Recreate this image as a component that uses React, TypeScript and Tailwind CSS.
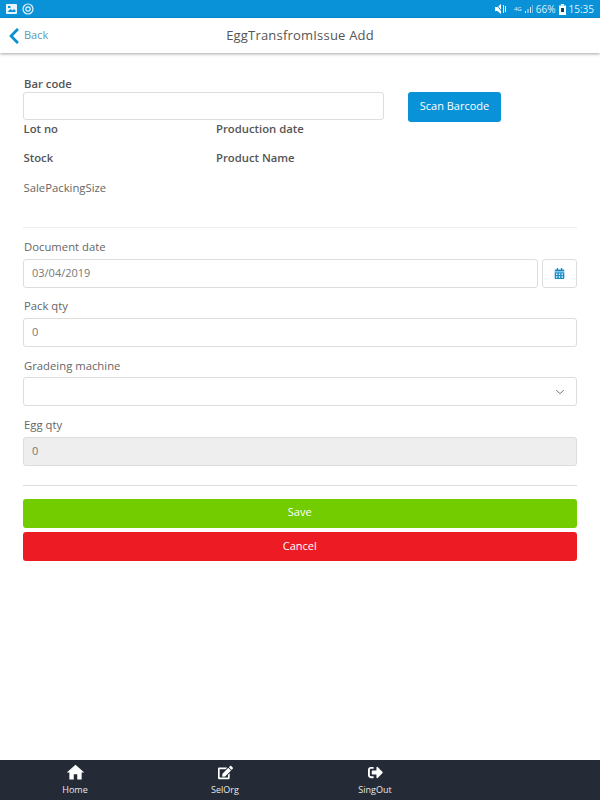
import { FaChevronLeft, FaCalendarAlt, FaEdit, FaSignOutAlt } from "react-icons/fa";
import { MdHome } from "react-icons/md";
import { ChevronDown } from "lucide-react";

function StatusBar() {
  return (
    <div className="h-[18px] bg-[#0a92d9] flex items-center justify-between pl-[6px] pr-[6px] text-[#dff1fa]">
      <div className="flex items-center gap-[5px]">
        <svg width="11" height="10" viewBox="0 0 11 10">
          <rect x="0" y="0" width="11" height="10" rx="1" fill="#e8f5fc" />
          <rect x="2" y="2" width="2.5" height="2" fill="#0a92d9" />
          <path d="M1.5 8 L4.5 5 L6.5 6.5 L8 5 L9.5 6.5 V8 Z" fill="#0a92d9" />
        </svg>
        <svg width="12" height="12" viewBox="0 0 12 12" fill="none" stroke="#e8f5fc">
          <circle cx="6" cy="6" r="5" strokeWidth="1.2" />
          <circle cx="6" cy="6" r="2.2" strokeWidth="1.2" />
        </svg>
      </div>
      <div className="flex items-center text-[10px] leading-none">
        <svg width="11" height="10" viewBox="0 0 11 10" fill="#fff" className="mr-[8px]">
          <path d="M0 3 H2.5 L6 0 V10 L2.5 7 H0 Z" />
          <path d="M1 0 L8 9" stroke="#0a92d9" strokeWidth="1" />
          <rect x="8" y="1" width="1" height="8" />
          <rect x="10" y="2" width="1" height="6" />
        </svg>
        <span className="text-[6px] leading-[6px] w-[8px] mr-[3px] text-center">4G</span>
        <svg width="8" height="8" viewBox="0 0 8 8" fill="#cfe9f7" className="mr-[3px]">
          <rect x="0" y="6" width="1" height="2" />
          <rect x="2.5" y="4" width="1" height="4" />
          <rect x="5" y="2" width="1" height="6" />
          <rect x="7" y="0" width="1" height="8" opacity="0.5" />
        </svg>
        <span>66%</span>
        <svg width="7" height="11" viewBox="0 0 7 11" className="mx-[3px]">
          <rect x="2" y="0" width="3" height="1.5" fill="#fff" />
          <rect x="0" y="1.5" width="7" height="9.5" rx="0.5" fill="#fff" />
          <rect x="2" y="4" width="3" height="4" fill="#16415c" />
        </svg>
        <span>15:35</span>
      </div>
    </div>
  );
}

function Header() {
  return (
    <div className="h-[35px] bg-white shadow-[0_1px_3px_rgba(0,0,0,0.35)] flex items-center relative">
      <div className="flex items-center pl-[5px] text-[11px] text-[#5b9bb8]">
        <FaChevronLeft className="text-[#0a8fd3] text-[18px] mr-[1px]" />
        <span>Back</span>
      </div>
      <div className="absolute inset-0 flex items-center justify-center text-[13px] text-[#555] tracking-[0.2px]">
        EggTransfromIssue Add
      </div>
    </div>
  );
}

function Field({ label, children }: { label: string; children: React.ReactNode }) {
  return (
    <div className="mb-[9.66px]">
      <div className="h-[20.67px] pl-[1px] text-[11.3px] leading-[17px] text-[#666]">{label}</div>
      {children}
    </div>
  );
}

const inputClass =
  "h-[29px] border border-[#dddddd] rounded-[3px] flex items-center px-[8px] text-[11px] text-[#777]";

function NavItem({ icon, label }: { icon: React.ReactNode; label: string }) {
  return (
    <div className="flex flex-col items-center pt-[4px]">
      <div className="h-[17px] flex items-center text-white">{icon}</div>
      <div className="text-[9px] leading-[17px] text-[#e8e8e8]">{label}</div>
    </div>
  );
}

export default function App() {
  return (
    <div className="w-[600px] h-[800px] bg-white flex flex-col font-['Open_Sans',sans-serif] overflow-hidden">
      <StatusBar />
      <Header />
      <div className="flex-1 pl-[23px] pr-[23.5px] pt-[23px]">
        <div className="flex h-[45px]">
          <div className="w-[361px]">
            <div className="h-[16px] pl-[1px] text-[11.3px] leading-[16px] font-semibold text-[#555]">Bar code</div>
            <div className="h-[28px] border border-[#dddddd] rounded-[3px]" />
          </div>
          <div className="ml-[24px] mt-[16px] w-[93px] h-[30px] bg-[#0a92d9] rounded-[3px] flex items-center justify-center pb-[1px] text-[11px] text-white">
            Scan Barcode
          </div>
        </div>
        <div className="grid grid-cols-[192.5px_1fr] pl-[0.5px] text-[11.3px] leading-[16px] text-[#555] font-semibold">
          <div className="h-[29px]">Lot no</div>
          <div>Production date</div>
          <div className="h-[30px]">Stock</div>
          <div>Product Name</div>
          <div className="font-normal text-[#666]">SalePackingSize</div>
        </div>
        <div className="mt-[31px] border-t border-[#eeeeee]" />
        <div className="mt-[10px]">
          <Field label="Document date">
            <div className="flex gap-[4px]">
              <div className={`flex-1 ${inputClass}`}>03/04/2019</div>
              <div className="w-[35px] h-[29px] border border-[#dddddd] rounded-[3px] flex items-center justify-center">
                <FaCalendarAlt className="text-[#1b8cc9] text-[11px]" />
              </div>
            </div>
          </Field>
          <Field label="Pack qty">
            <div className={inputClass}>0</div>
          </Field>
          <Field label="Gradeing machine">
            <div className={`${inputClass} justify-end pr-[9px]`}>
              <ChevronDown size={14} strokeWidth={1.5} className="text-[#555]" />
            </div>
          </Field>
          <Field label="Egg qty">
            <div className={`${inputClass} bg-[#eeeeee]`}>0</div>
          </Field>
        </div>
        <div className="mt-[19px] border-t border-[#dddddd]" />
        <div className="mt-[13px] h-[29px] bg-[#72cc00] rounded-[3px] flex items-center justify-center pb-[1px] text-[11px] text-white">
          Save
        </div>
        <div className="mt-[4px] h-[29px] bg-[#ed1c24] rounded-[3px] flex items-center justify-center text-[11px] text-white">
          Cancel
        </div>
      </div>
      <div className="h-[40px] bg-[#252b36] grid grid-cols-[150px_150px_150px]">
        <NavItem icon={<MdHome className="text-[21px]" />} label="Home" />
        <NavItem icon={<FaEdit className="text-[15px]" />} label="SelOrg" />
        <NavItem icon={<FaSignOutAlt className="text-[15px]" />} label="SingOut" />
      </div>
    </div>
  );
}
